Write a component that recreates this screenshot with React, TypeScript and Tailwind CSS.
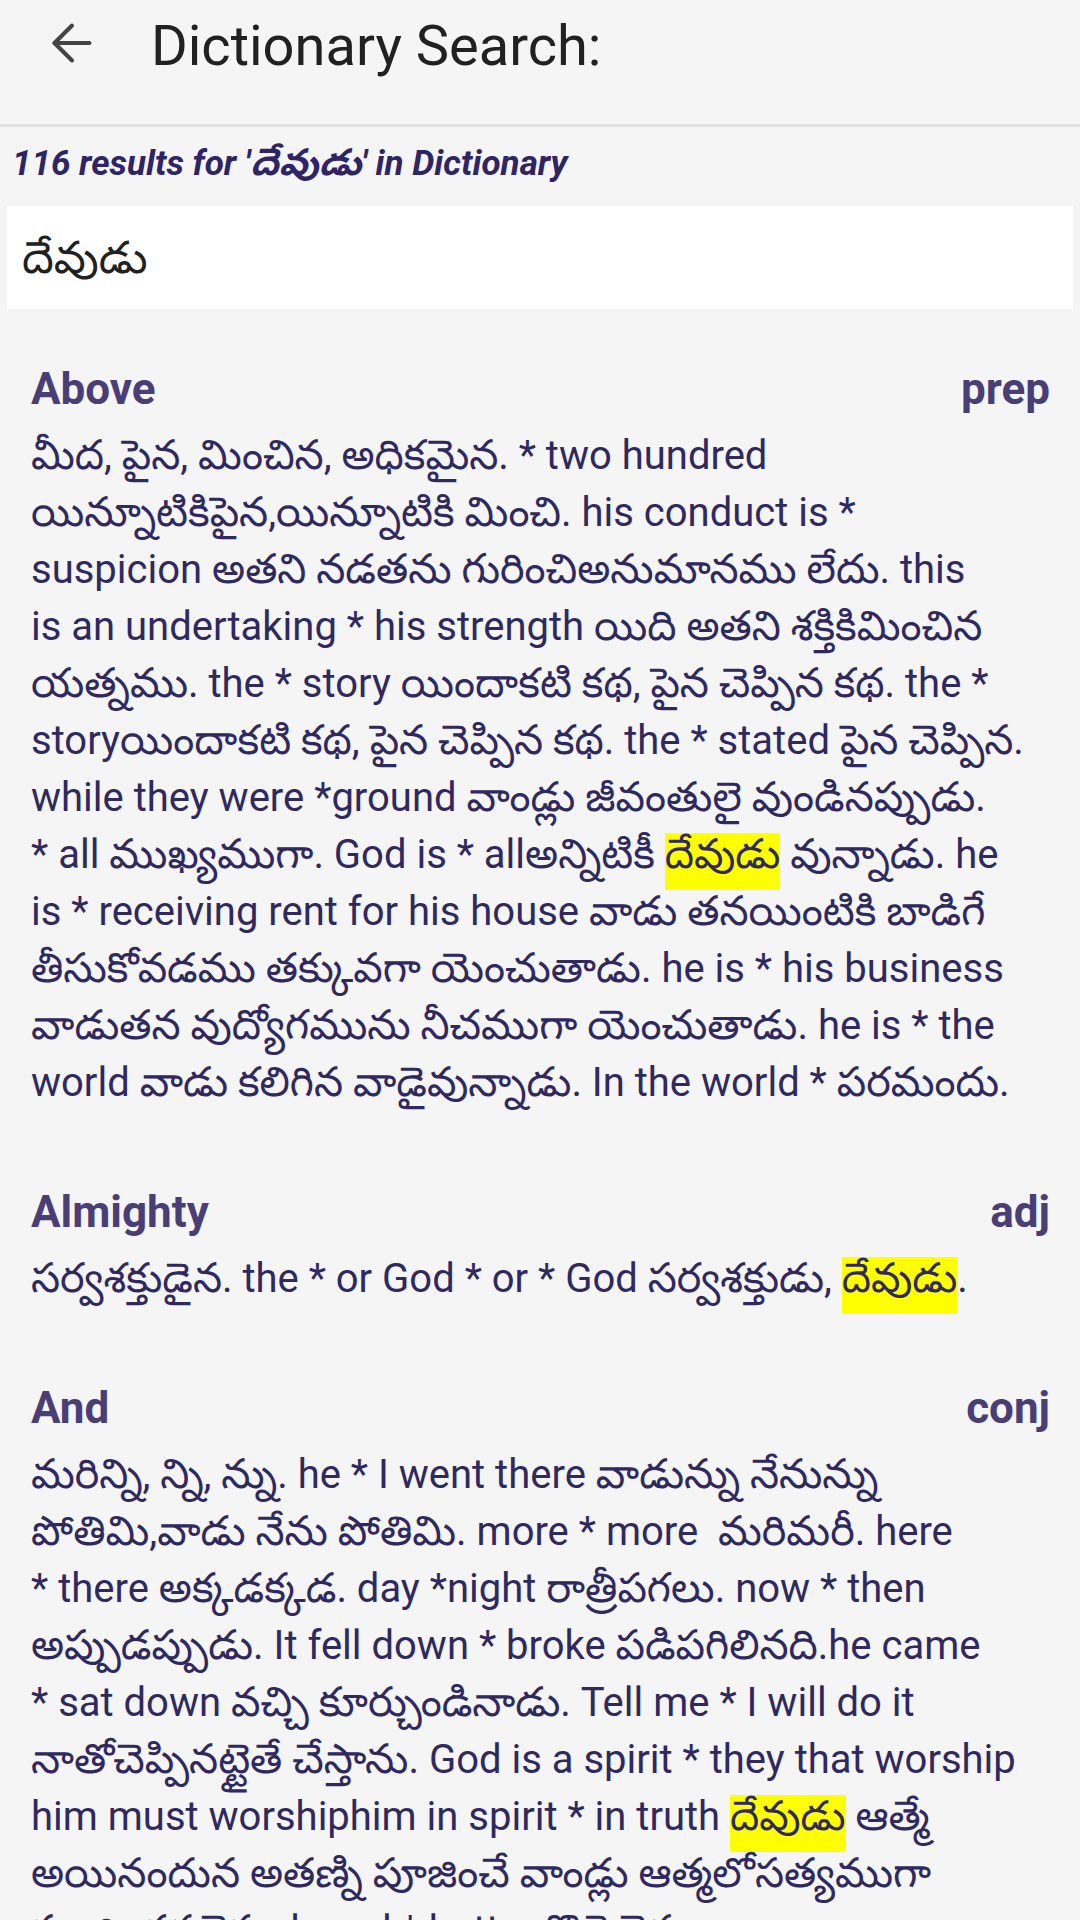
import { ArrowLeft } from 'lucide-react'

interface Entry {
  word: string
  pos: string
  lines: string[]
}

// [[...]] marks the highlighted search term
const entries: Entry[] = [
  {
    word: 'Above',
    pos: 'prep',
    lines: [
      'మీద, పైన, మించిన, అధికమైన. * two hundred',
      'యిన్నూటికిపైన,యిన్నూటికి మించి. his conduct is *',
      'suspicion అతని నడతను గురించిఅనుమానము లేదు. this',
      'is an undertaking * his strength యిది అతని శక్తికిమించిన',
      'యత్నము. the * story యిందాకటి కథ, పైన చెప్పిన కథ. the *',
      'storyయిందాకటి కథ, పైన చెప్పిన కథ. the * stated పైన చెప్పిన.',
      'while they were *ground వాండ్లు జీవంతులై వుండినప్పుడు.',
      '* all ముఖ్యముగా. God is * allఅన్నిటికీ [[దేవుడు]] వున్నాడు. he',
      'is * receiving rent for his house వాడు తనయింటికి బాడిగే',
      'తీసుకోవడము తక్కువగా యెంచుతాడు. he is * his business',
      'వాడుతన వుద్యోగమును నీచముగా యెంచుతాడు. he is * the',
      'world వాడు కలిగిన వాడైవున్నాడు. In the world * పరమందు.',
    ],
  },
  {
    word: 'Almighty',
    pos: 'adj',
    lines: ['సర్వశక్తుడైన. the * or God * or * God సర్వశక్తుడు, [[దేవుడు]].'],
  },
  {
    word: 'And',
    pos: 'conj',
    lines: [
      'మరిన్ని, న్ని, న్ను. he * I went there వాడున్ను నేనున్ను',
      'పోతిమి,వాడు నేను పోతిమి. more * more  మరిమరీ. here',
      '* there అక్కడక్కడ. day *night రాత్రీపగలు. now * then',
      'అప్పుడప్పుడు. It fell down * broke పడిపగిలినది.he came',
      '* sat down వచ్చి కూర్చుండినాడు. Tell me * I will do it',
      'నాతోచెప్పినట్టైతే చేస్తాను. God is a spirit * they that worship',
      'him must worshiphim in spirit * in truth [[దేవుడు]] ఆత్మే',
      'అయినందున అతణ్ని పూజించే వాండ్లు ఆత్మలోసత్యముగా',
      'పూజించవలెను. bread * butter రొట్టె వెన్న.',
    ],
  },
]

// Telugu runs render a touch larger than the Latin text
function Mixed({ text }: { text: string }) {
  const parts = text.split(/([\u0C00-\u0C7F]+)/)
  return (
    <>
      {parts.map((p, i) =>
        /[\u0C00-\u0C7F]/.test(p) ? (
          <span key={i} className="text-[1.035em] leading-[40px]">
            {p}
          </span>
        ) : (
          <span key={i} className="whitespace-pre">
            {p}
          </span>
        )
      )}
    </>
  )
}

function Line({ text }: { text: string }) {
  const parts = text.split(/(\[\[.*?\]\])/)
  return (
    <span className="block h-[57px] whitespace-nowrap">
      {parts.map((p, i) =>
        p.startsWith('[[') ? (
          <span
            key={i}
            className="inline-block align-top h-[50px] mt-[7px] leading-[43px] bg-[#ffff00] shadow-[0_7px_0_0_#ffff00]"
          >
            <Mixed text={p.slice(2, -2)} />
          </span>
        ) : (
          <Mixed key={i} text={p} />
        )
      )}
    </span>
  )
}

function EntryCard({ entry }: { entry: Entry }) {
  return (
    <div>
      <div className="flex items-center justify-between leading-[52px] text-[44px] font-bold text-[#4a3e76]">
        <span>{entry.word}</span>
        <span>{entry.pos}</span>
      </div>
      <p className="mt-3 text-[40px] leading-[57px] text-[#2f2960]">
        {entry.lines.map((l, i) => (
          <Line key={i} text={l} />
        ))}
      </p>
    </div>
  )
}

export default function App() {
  return (
    <div className="w-[1080px] h-[1920px] overflow-hidden bg-[#f5f5f5] font-['Roboto','Noto_Sans_Telugu','Noto_Sans',sans-serif]">
      <header className="h-[124px] flex items-start">
        <button className="ml-[42px] mt-[13px] w-[60px] h-[60px] flex items-center justify-center text-[#444444]">
          <ArrowLeft size={60} strokeWidth={1.6} />
        </button>
        <h1 className="ml-[49px] mt-[10px] text-[56px] leading-[72px] text-[#212121]">Dictionary Search:</h1>
      </header>
      <div className="h-[3px] bg-[#e2e2e2]" />

      <div className="mt-3 pl-3 text-[35px] leading-[48px] font-bold italic text-[#2e2466]">
        116 results for '<span className="text-[1.06em]">దేవుడు</span>' in Dictionary
      </div>

      <div className="mt-[18px] mx-[7px] h-[103px] bg-white flex items-center pl-[15px] text-[45px] text-[#212121]">
        దేవుడు
      </div>

      <div className="pt-[54px] pl-[31px] pr-[30px] flex flex-col gap-[75px]">
        {entries.map((e) => (
          <EntryCard key={e.word} entry={e} />
        ))}
      </div>
    </div>
  )
}
